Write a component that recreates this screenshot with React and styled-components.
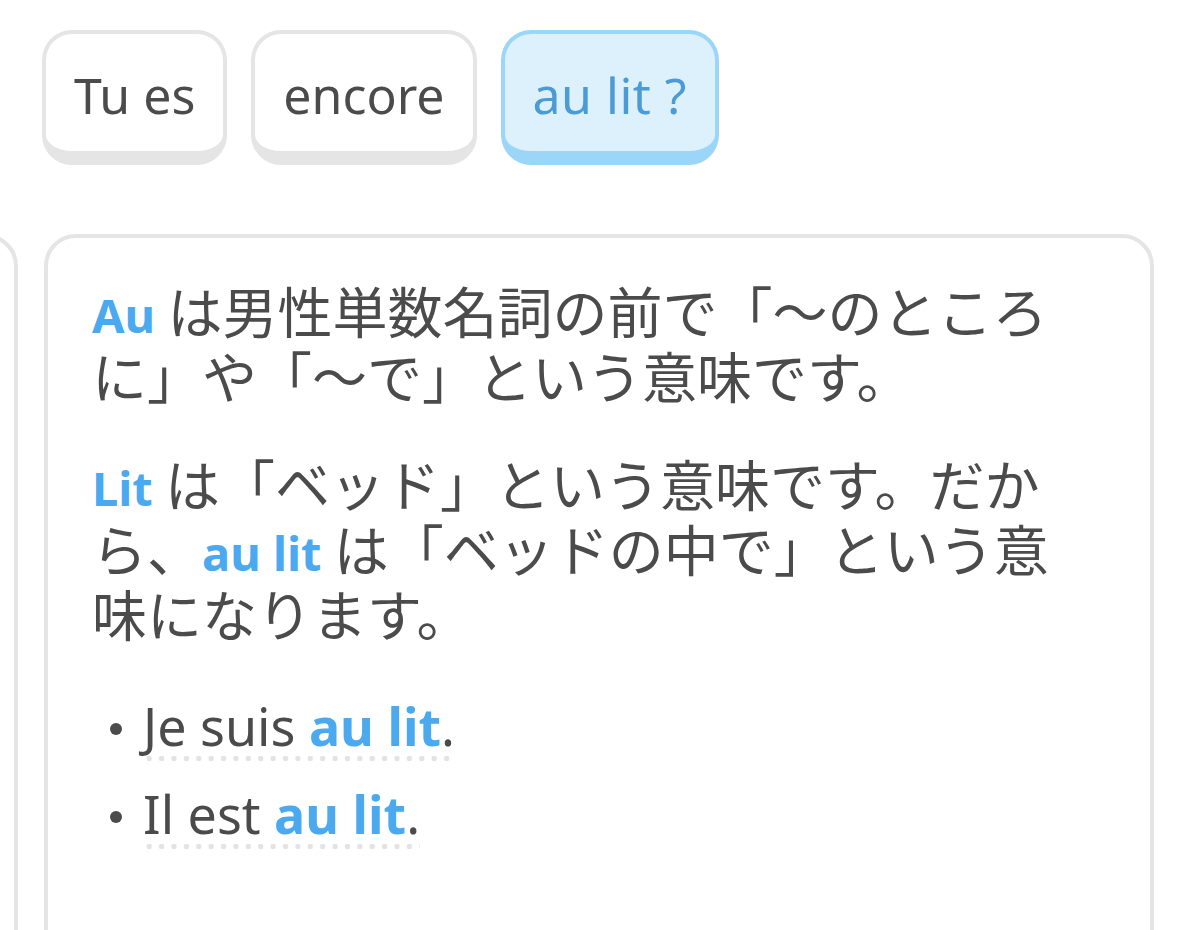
import styled, { createGlobalStyle } from "styled-components";

const GlobalStyle = createGlobalStyle`
	html, body {
		margin: 0;
		padding: 0;
		background: #fff;
		overflow: hidden;
	}
	body {
		font-family: "Noto Sans", "Noto Sans CJK JP", sans-serif;
		color: #4b4b4b;
	}
`;

const Page = styled.div`
	width: 1200px;
	height: 930px;
	overflow: hidden;
`;

const ChipRow = styled.div`
	display: flex;
	gap: 24px;
	padding: 30px 0 0 42px;
`;

const Chip = styled.div`
	display: flex;
	align-items: center;
	justify-content: center;
	box-sizing: border-box;
	height: 135px;
	padding: 4px 28px 0;
	border: 4px solid ${(p) => (p.selected ? "#9bd6f9" : "#e5e5e5")};
	border-bottom-width: 14px;
	border-radius: 30px;
	background: ${(p) => (p.selected ? "#ddf1fd" : "#fff")};
	color: ${(p) => (p.selected ? "#4a9bd6" : "#4b4b4b")};
	font-size: 50px;
	letter-spacing: ${(p) => (p.selected ? "0.5px" : "0")};
`;

const Track = styled.div`
	display: flex;
	gap: 26px;
	margin-top: 69px;
	margin-left: -1000px;
`;

const Card = styled.div`
	flex: none;
	box-sizing: border-box;
	width: ${(p) => p.width}px;
	min-height: 760px;
	border: 4px solid #e5e5e5;
	border-radius: 32px;
	background: #fff;
`;

const Body = styled.div`
	padding: 39px 65px 0 44px;
`;

const Para = styled.p`
	margin: 0 0 43px;
	font-family: "Noto Sans CJK JP", sans-serif;
	font-size: 55px;
	line-height: 65px;
	color: #4b4b4b;
`;

const Hi = styled.b`
	font-family: "Noto Sans", sans-serif;
	font-weight: 700;
	font-size: ${(p) => p.size || 47}px;
	line-height: 1;
	color: #4aa9ef;
`;

const List = styled.ul`
	list-style: none;
	margin: 0;
	padding: 5px 0 0 18px;
	display: flex;
	flex-direction: column;
	gap: 19px;
`;

const Item = styled.li`
	display: flex;
	align-items: flex-start;
	gap: 21px;
	font-size: 52px;
	line-height: 66px;
	&::before {
		content: "";
		width: 12px;
		height: 12px;
		border-radius: 50%;
		background: #4b4b4b;
		margin-top: 30px;
		flex: none;
	}
`;

const Sentence = styled.span`
	padding-bottom: 3px;
	background-image: radial-gradient(circle, #e3e3e3 2.6px, transparent 3px);
	background-size: 12.4px 7px;
	background-repeat: repeat-x;
	background-position: 0 100%;
`;

export default function App() {
	return (
		<Page>
			<GlobalStyle />
			<ChipRow>
				<Chip>Tu es</Chip>
				<Chip>encore</Chip>
				<Chip selected>au lit ?</Chip>
			</ChipRow>
			<Track>
				<Card width={1018} />
				<Card width={1110}>
					<Body>
						<Para>
							<Hi>Au</Hi> は男性単数名詞の前で「〜のところに」や「〜で」という意味です。
						</Para>
						<Para>
							<Hi>Lit</Hi> は「ベッド」という意味です。だから、<Hi>au lit</Hi> は「ベッドの中で」という意味になります。
						</Para>
						<List>
							<Item>
								<Sentence>
									Je suis <Hi size={52}>au lit</Hi>.
								</Sentence>
							</Item>
							<Item>
								<Sentence>
									Il est <Hi size={52}>au lit</Hi>.
								</Sentence>
							</Item>
						</List>
					</Body>
				</Card>
			</Track>
		</Page>
	);
}
